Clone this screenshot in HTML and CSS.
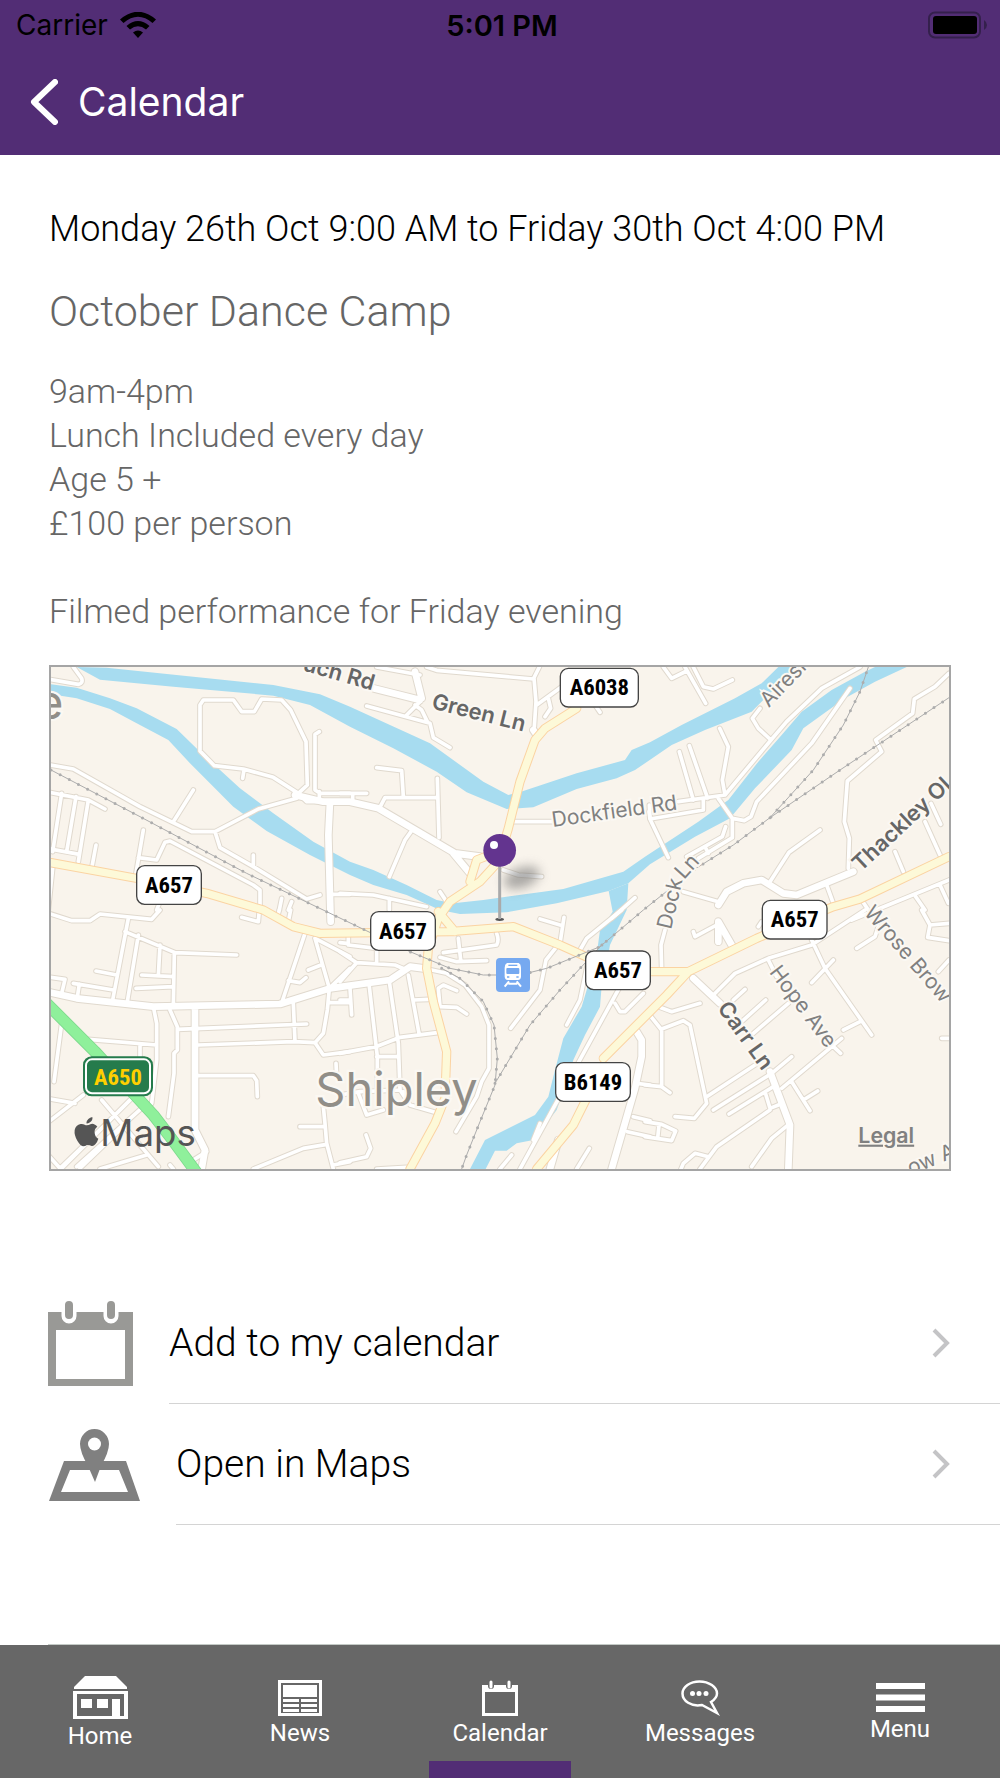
FILE: index.html
```html
<!DOCTYPE html>
<html lang="en">
<head>
  <meta charset="UTF-8">
  <meta name="viewport" content="width=device-width, initial-scale=1.0">
  <title>Calendar</title>
  <link rel="stylesheet" href="styles.css">
</head>
<body>
  <header class="header">
    <div class="status">
      <div class="carrier">
        <span>Carrier</span>
        <svg width="36" height="26" viewBox="0 0 36 26" aria-hidden="true">
          <path d="M0 7.5Q18-8 36 7.5L32.5 11Q18-1.5 3.5 11z"/>
          <path d="M6.5 14Q18 4 29.5 14L26 17.5Q18 11 10 17.5z"/>
          <path d="M13 20.5Q18 16.5 23 20.5L18 26z"/>
        </svg>
      </div>
      <span class="time">5:01 PM</span>
      <svg class="battery" width="60" height="28" viewBox="0 0 60 28" aria-hidden="true">
        <rect x="1" y="1.5" width="51" height="25" rx="6" fill="none" stroke="#34204c" stroke-width="2"/>
        <rect x="5" y="5" width="44" height="18" rx="3"/>
        <path d="M56 9q3 2 3 5t-3 5z" fill="#34204c"/>
      </svg>
    </div>
    <a href="#" class="back">
      <svg width="28" height="46" viewBox="0 0 28 46" aria-hidden="true">
        <path d="M25 3L4 23L25 43" fill="none" stroke="#fff" stroke-width="6" stroke-linecap="round" stroke-linejoin="round"/>
      </svg>
      <span>Calendar</span>
    </a>
  </header>

  <main class="main">
    <!-- Event details -->
    <section class="event">
      <p class="date">Monday 26th Oct 9:00 AM to Friday 30th Oct 4:00 PM</p>
      <h1>October Dance Camp</h1>
      <p class="description">9am-4pm<br>Lunch Included every day<br>Age 5 +<br>£100 per person<br><br>Filmed performance for Friday evening</p>

      <!-- Map -->
      <div class="map">
        <svg viewBox="33 36 2694 1506" role="img" aria-label="Map of Shipley">
          <defs>
            <filter id="soft" x="-50%" y="-50%" width="200%" height="200%"><feGaussianBlur stdDeviation="16"/></filter>
            <g id="minor">
              <g>
                <path d="M20 72L115 88Q130 85 125 70L100 36M20 328L100 342L300 455L455 530H525L655 462L770 430M525 530L540 578L640 635L800 732L840 720M640 635V600M400 500L460 405M20 410L145 435L195 462M65 415L38 590M108 425L80 590M145 435L115 620M20 580L118 598M168 570L155 640M310 525L287 660M295 608L350 615L375 562L390 558L640 690L660 705V765M523 332L480 288V150L490 135H580L605 170H643L665 132L725 135L752 165L798 260L802 390L775 415L700 367L610 342L523 332M612 345L608 370M838 230L825 238V405L840 415H930M775 415L800 440L850 440M838 410V438M880 718H930M38 640L25 765M725 730L718 765M755 740L745 765M350 765L360 740"/>
              </g>
              <g transform="translate(900 0)">
                <path d="M110 36L240 60M260 36L290 46L580 72L598 36M582 70L588 140L583 215M590 150L665 95M625 130L632 160L615 185M240 140L200 180M80 153L270 205L280 248L330 278M225 150L245 165L262 200M765 150L780 172M0 415H80M38 415V440M110 338L185 347L190 425M118 460L135 428H292M292 370L297 548M213 530L195 555L148 665M515 500H640M490 645L535 660L605 665M0 715L100 720L260 755M148 730V765M300 710L320 740M815 790L885 728M930 490L928 450"/>
              </g>
              <g transform="translate(1815 0)">
                <path d="M55 36L80 70L125 48M120 36L182 145M145 36L175 95L205 102L262 75M345 160L322 190L340 220L378 255M645 36L530 100L425 200L378 255L240 420L100 440M224 220L250 275L232 375L240 420M133 272L188 430M103 290L145 435M175 430V465L15 492L70 608M15 492L12 470M220 430L262 490L298 497L318 485L335 440L500 265L615 100M262 490V548L160 610M242 515L232 545L125 605M180 575L190 595M912 55L870 95L808 132L803 175L692 255L710 290L607 378L598 500L613 550L610 640M375 680L432 592L525 525M115 710L225 742M750 590L775 650M840 500L885 600M858 445L887 508M545 690L565 745M620 795L912 675M812 725L840 765M885 690L910 745M650 735L670 765"/>
              </g>
              <g transform="translate(0 765)">
                <path d="M20 8L95 32H150L180 12L335 28L360 0M265 25L218 270M255 65L405 128L590 135M295 75L262 275M360 105L355 198M403 130L400 285M305 195L400 200M288 235L400 230M168 183L230 195M100 220L220 240M118 222L112 262M20 200L75 208L65 250M605 22L655 35L658 0M718 0L712 20M752 0L745 35M795 70L728 270M745 212L780 218L798 203M825 85L868 235L862 300L850 370L825 398L760 395L475 405M843 165L805 180M825 85L930 140M868 235L930 175M870 278H930M760 280L765 395M412 358L800 342M825 398L850 435L930 425M475 497H640L650 512L652 560M888 460L890 500M20 565L105 580M145 388L350 405M300 405V440M342 300L350 340V450L335 580M390 300L412 350V420L402 430V490L385 620M65 340L42 515M130 555L20 640M185 570L355 770M275 565L20 820M310 590L110 770M20 730L60 775L200 640M120 775L260 640M180 777L320 735M390 765L400 777M780 650H850M850 590L855 640L860 700L880 777M640 777L790 715L860 703M880 765L930 755M460 750L500 725"/>
              </g>
              <g transform="translate(900 765)">
                <path d="M25 80V105M25 105L110 115V155M20 100L0 98M0 125L50 158L165 165L200 180M50 158L0 215M355 85L362 150M310 128L470 105Q478 90 470 70M300 142L350 155L440 152M600 27L660 45M672 22L660 100M650 110L618 150L600 240L512 355M745 150L720 270L680 345M845 0L740 85L720 120M840 230L540 777M825 280L840 305H855L910 250M0 270H30M30 235L35 315M88 230L112 440V530M148 215L175 400L180 540M205 195L237 370M222 270L265 268M300 290L295 235L310 225L350 242M300 290L350 292L380 312M0 430L108 410L180 382L292 368M110 440H175M275 180L320 190L375 225L425 290L447 345V475L425 515L410 560L348 665M0 555L60 545L180 540L210 585L285 607M55 550L80 615L130 600M78 675L92 715L80 740L0 758M190 545L200 580M600 640L580 690M748 715L710 777M515 735L480 777M890 520L930 525M880 620L930 632M862 665L930 680M110 777L200 772"/>
              </g>
              <g transform="translate(1815 765)">
                <path d="M60 60L48 105L50 180M215 45L150 80L145 65M340 50L350 35M205 255L270 190L370 145L500 105L660 0M500 90L540 175L680 375M565 150L500 218M645 335L595 360M370 150L395 200M635 115L690 80L700 50M830 0L855 45L912 40M855 45L848 82L912 92M912 150L880 185M890 385H912M40 290L80 305L165 280M10 310L50 360V530L75 548M50 357L115 332L135 345L185 580L148 625L90 620M50 530L0 525M265 270L300 238M290 335L362 270M325 370L430 280M185 560L330 465M205 600L380 490L440 440M252 612L385 530M410 535L590 385M555 400L587 430M440 515L495 602M475 570L518 543M360 545L375 595L400 585M375 600L215 710L165 777M435 640L380 685L320 770M190 740L150 730L115 760L108 777M0 635L50 643L92 663L80 692L0 680M42 645L38 685"/>
              </g>
            </g>
            <g id="major">
              <path d="M765 420L850 440H930L1015 460L1245 595L1320 605M1240 595L1290 655M870 440L865 540L872 800M1000 100L1140 135M1125 50L1145 130M1480 225L1490 240M20 1010L110 1030L340 1055L720 1047L870 1000L1050 975L1110 935L1150 940M465 1055V1425L495 1485L485 1542M1960 970L2040 1045M2190 1250L2250 1410L2245 1542M2035 860V800L2075 870M2035 750L2060 710L2110 685L2165 675L2230 715L2270 720L2440 650M1790 1130L1805 1155V1205L1785 1300L1715 1542M1555 1455L1530 1542"/>
            </g>
            <g id="primary">
              <path d="M33 623L300 672L500 715L670 765L760 815L840 835L1230 830L1420 815L1560 870L1660 915L1740 950L1945 950L2150 850L2380 755L2460 732L2727 605M1610 160L1515 220L1485 255L1440 380L1405 520L1375 620L1320 680L1230 740L1195 790L1165 880L1160 940L1180 1040L1220 1190L1215 1330L1185 1405L1110 1542M1375 590L1310 615L1290 680M1945 950L1880 1020L1690 1210M1640 1330L1600 1410L1490 1542M1195 770L1245 830"/>
            </g>
            <g id="rail">
              <path d="M33 345L300 485L620 655L860 770L1110 890L1230 940L1330 960H1440L1520 940L1680 875L1810 765L1960 645L2080 570L2190 488L2400 345L2727 128M2190 488L2320 345L2410 210L2460 110L2485 36M1205 940L1260 970L1330 1040L1362 1110L1372 1210L1365 1290L1320 1400L1280 1500L1265 1542M1365 1285L1470 1110L1560 1005L1690 865"/>
            </g>
          </defs>

          <rect x="33" y="36" width="2694" height="1506" fill="#f9f4ec"/>

          <g class="water">
            <path d="M110 36L200 38 700 90 840 118 930 155 1170 265 1330 380 1405 420 1450 408 1610 355 1755 315 1775 285 1830 262 1925 210 2085 130 2165 85 2215 36H2290L2195 110 2135 170 1995 225 1895 270 1815 325 1785 345 1730 370 1610 402 1480 457 1400 462 1280 412 1190 350 1060 280 930 215 810 150 700 122 400 95 180 74z"/>
            <path d="M33 88L110 98 210 130 290 160 410 222 480 290 600 400 700 475 820 560 930 620 1000 645 1100 690 1190 735 1240 745 1330 735 1570 702 1750 650 1815 605 1975 500 2065 435 2155 320 2225 240 2285 170 2375 105 2475 50 2505 36H2600L2505 80 2415 130 2290 220 2255 285 2145 400 2070 490 1965 545 1830 628 1765 685 1706 708 1550 745 1400 772 1260 777 1200 765 1100 720 1000 690 930 660 810 600 680 528 580 455 450 325 385 255 290 205 210 162 110 130 33 118z"/>
            <path d="M1706 708L1718 770 1680 825 1670 900 1640 1005 1625 1055 1570 1150 1545 1245 1525 1325 1485 1380 1335 1455 1290 1542H1337L1365 1487H1400L1430 1465 1480 1455 1550 1365 1580 1280 1600 1215 1635 1140 1680 1055 1684 1005 1710 870 1760 765 1765 685z"/>
          </g>

          <g class="road">
            <use href="#minor" stroke="#e0d9ce" stroke-width="17"/>
            <use href="#major" stroke="#e0d9ce" stroke-width="26"/>
            <use href="#minor" stroke="#fff" stroke-width="11"/>
            <use href="#major" stroke="#fff" stroke-width="20"/>
            <use href="#primary" stroke="#fbd3a2" stroke-width="28"/>
            <use href="#primary" stroke="#fdf9d8" stroke-width="22"/>
            <path d="M20 1045L165 1190L340 1380L390 1445L475 1560" stroke="#7dd98d" stroke-width="36"/>
            <path d="M20 1045L165 1190L340 1380L390 1445L475 1560" stroke="#8ff09b" stroke-width="31"/>
          </g>
          <g class="rail">
            <use href="#rail" stroke-width="3"/>
            <use href="#rail" stroke-width="9" stroke-dasharray="0 31"/>
          </g>

          <!-- Street and place names -->
          <g class="street">
            <text class="strong" transform="translate(786 46) rotate(16)">uch Rd</text>
            <text class="strong" transform="translate(1172 160) rotate(14)">Green Ln</text>
            <text transform="translate(1538 516) rotate(-8)">Dockfield Rd</text>
            <text transform="translate(2186 160) rotate(-46)">Airesi</text>
            <text transform="translate(1893 825) rotate(-77)">Dock</text>
            <text transform="translate(1932 675) rotate(-48)">Ln</text>
            <text class="strong" transform="translate(2462 652) rotate(-43)">Thackley Ol</text>
            <text transform="translate(2470 775) rotate(49)">Wrose Brow</text>
            <text class="strong" transform="translate(2030 1060) rotate(54)">Carr Ln</text>
            <text transform="translate(2186 952) rotate(53)">Hope Ave</text>
            <text transform="translate(2612 1560) rotate(-22)">ow A</text>
          </g>
          <g class="place">
            <text x="-12" y="193">e</text>
            <text x="826" y="1353">Shipley</text>
          </g>

          <!-- Road shields -->
          <g class="shield">
            <rect x="290" y="632" width="194" height="116" rx="24"/><text x="387" y="713">A657</text>
            <rect x="1561" y="40" width="234" height="116" rx="24"/><text x="1678" y="121">A6038</text>
            <rect x="992" y="770" width="194" height="116" rx="24"/><text x="1089" y="851">A657</text>
            <rect x="1637" y="888" width="194" height="116" rx="24"/><text x="1734" y="969">A657</text>
            <rect x="2167" y="736" width="194" height="116" rx="24"/><text x="2264" y="817">A657</text>
            <rect x="1547" y="1223" width="224" height="116" rx="24"/><text x="1659" y="1304">B6149</text>
          </g>
          <g class="shield green">
            <rect class="edge" x="129" y="1204" width="210" height="120" rx="26"/>
            <rect x="138" y="1213" width="192" height="102" rx="18"/><text x="234" y="1289">A650</text>
          </g>

          <!-- Station -->
          <rect x="1368" y="909" width="102" height="102" rx="12" fill="#76a9f0"/>
          <path d="M1401 924H1436Q1443 928 1443 938V964Q1443 975 1434 975H1403Q1394 975 1394 964V938Q1394 928 1401 924z" fill="#fff"/>
          <path d="M1405 931H1432" stroke="#76a9f0" stroke-width="4"/>
          <rect x="1399" y="939" width="39" height="18" rx="3" fill="#76a9f0"/>
          <path d="M1401 966H1408M1429 966H1436" stroke="#76a9f0" stroke-width="5"/>
          <path d="M1407 979L1394 995M1430 979L1443 995M1405 986H1432" stroke="#fff" stroke-width="6"/>

          <!-- Pin -->
          <ellipse cx="1445" cy="668" rx="56" ry="30" fill="#777" opacity="0.6" filter="url(#soft)" transform="rotate(-20 1445 668)"/>
          <ellipse cx="1379" cy="793" rx="13" ry="5" fill="#555"/>
          <path d="M1379 620V792" stroke="#aaa" stroke-width="9"/>
          <circle cx="1379" cy="586" r="49" fill="#63348f"/>
          <circle cx="1362" cy="570" r="12" fill="#fff"/>

          <!-- Credits -->
          <g class="credits">
            <path d="M157 1386Q159 1395 151 1401 146 1406 139 1405 139 1397 145 1392 150 1387 157 1386zM140 1411Q147 1411 151 1408 157 1404 165 1409 169 1411 172 1415 162 1422 164 1434 165 1446 175 1451 172 1461 166 1468 161 1474 155 1473 147 1469 141 1470 136 1474 129 1474 121 1472 112 1457 102 1441 104 1425 107 1410 122 1407 128 1406 134 1409 137 1411 140 1411z"/>
            <text class="brand" x="181" y="1472">Maps</text>
            <a href="#"><text class="legal" x="2455" y="1463">Legal</text></a>
          </g>
        </svg>
      </div>
    </section>

    <!-- Actions -->
    <div class="actions">
      <button type="button" class="action">
        <svg width="85" height="86" viewBox="0 0 85 86" aria-hidden="true">
          <path d="M0 11H85V85H0zM8 29V78H77V29z" fill="#999996" fill-rule="evenodd"/>
          <path d="M21 5V15M63 5V15" stroke="#fff" stroke-width="15" stroke-linecap="round"/>
          <path d="M21 4V14M63 4V14" stroke="#999996" stroke-width="8" stroke-linecap="round"/>
        </svg>
        <span class="label">
          <span>Add to my calendar</span>
          <svg width="18" height="32" viewBox="0 0 18 32" aria-hidden="true"><path d="M2 3L15 16L2 29" fill="none" stroke="#c4c4c6" stroke-width="4"/></svg>
        </span>
      </button>
      <button type="button" class="action">
        <svg width="92" height="74" viewBox="0 0 92 74" aria-hidden="true">
          <path d="M16 33H78L92 73H1zM22 42L13 64H80L71 42z" fill="#808080" fill-rule="evenodd"/>
          <path d="M47 54L40 38Q32 24 32 16A14.5 15 0 0 1 61 16Q61 24 53 38z" fill="#808080"/>
          <circle cx="46.5" cy="16" r="6.5" fill="#fff"/>
        </svg>
        <span class="label">
          <span>Open in Maps</span>
          <svg width="18" height="32" viewBox="0 0 18 32" aria-hidden="true"><path d="M2 3L15 16L2 29" fill="none" stroke="#c4c4c6" stroke-width="4"/></svg>
        </span>
      </button>
    </div>
  </main>

  <!-- Tab bar -->
  <nav class="tabs">
    <a href="#">
      <svg width="55" height="43" viewBox="0 0 55 43" aria-hidden="true">
        <path d="M12 0H43L54 11V13H1V11z"/>
        <path d="M0 15H55V43H0zM4 18V40H51V18z" fill-rule="evenodd"/>
        <path d="M8 23H19V32H8zM24 23H35V32H24zM39 23H47V41H39z"/>
      </svg>
      <span>Home</span>
    </a>
    <a href="#">
      <svg width="44" height="36" viewBox="0 0 44 36" aria-hidden="true">
        <path d="M0 0H44V36H0zM3 3V33H41V3z" fill-rule="evenodd"/>
        <path d="M5 5H39V17H5zM5 19H21V22H5zM23 19H39V22H23zM5 24H21V27H5zM23 24H39V27H23zM5 29H21V32H5zM23 29H39V32H23z"/>
      </svg>
      <span>News</span>
    </a>
    <a href="#" class="active">
      <svg width="36" height="36" viewBox="0 0 36 36" aria-hidden="true">
        <path d="M0 5H36V36H0zM3 12V33H33V12z" fill-rule="evenodd"/>
        <path d="M9 2V6M27 2V6" stroke="#676767" stroke-width="6" stroke-linecap="round"/>
        <path d="M9 2V7M27 2V7" stroke="#fff" stroke-width="3" stroke-linecap="round"/>
      </svg>
      <span>Calendar</span>
    </a>
    <a href="#">
      <svg width="39" height="36" viewBox="0 0 39 36" aria-hidden="true">
        <path d="M21 25C10 27 1.5 21 1.5 13.5C1.5 7 9 1.5 18.5 1.5S36 7 36 13.5Q36 18 30 22L36 33z" fill="none" stroke="#fff" stroke-width="2.5"/>
        <circle cx="11.5" cy="13.5" r="2.5"/><circle cx="18" cy="13.5" r="2.5"/><circle cx="25" cy="13.5" r="2.5"/>
      </svg>
      <span>Messages</span>
    </a>
    <a href="#">
      <svg width="49" height="29" viewBox="0 0 49 29" aria-hidden="true">
        <path d="M0 0H49V6H0zM0 11.5H49V17.5H0zM0 23H49V29H0z"/>
      </svg>
      <span>Menu</span>
    </a>
  </nav>
</body>
</html>
```
FILE: styles.css
```css
* {
  box-sizing: border-box;
}
body {
  font-family: Roboto, sans-serif;
  font-weight: 300;
  background-color: #fff;
  color: #000;
  margin: 0;
  min-height: 100vh;
  display: flex;
  flex-direction: column;
}
svg {
  display: block;
  flex-shrink: 0;
}
h1, p {
  margin: 0;
}
a {
  color: inherit;
  text-decoration: none;
}

/* Header */
.header {
  background-color: #522d75;
  font-family: Inter, sans-serif;
  font-weight: 400;
}
.status {
  display: grid;
  grid-template-columns: 1fr auto 1fr;
  align-items: center;
  height: 50px;
  padding: 0 12px 0 16px;
  font-size: 28px;
}
.carrier {
  display: flex;
  align-items: center;
  gap: 12px;
}
.time {
  font-size: 29px;
  font-weight: 600;
}
.battery {
  justify-self: end;
}
.back {
  display: inline-flex;
  align-items: center;
  gap: 20px;
  height: 105px;
  padding-left: 30px;
  padding-bottom: 2px;
  font-size: 39px;
  color: #fff;
}
.header {
  display: flex;
  flex-direction: column;
  align-items: flex-start;
}
.status {
  width: 100%;
}

/* Event */
.main {
  flex: 1;
  display: flex;
  flex-direction: column;
}
.main::after {
  content: "";
  margin-top: auto;
  margin-left: 48px;
  border-top: 1px solid #c4cac6;
}
.event {
  padding: 52px 49px 0;
}
.date {
  font-size: 36px;
  line-height: 44px;
}
h1 {
  margin: 34px 0 32px;
  font-size: 43px;
  font-weight: 300;
  line-height: 52px;
  color: #666;
}
.description {
  font-size: 34px;
  line-height: 44px;
  color: #666;
}
.map {
  margin-top: 32px;
  border: 2px solid #a5a5a5;
}
.map svg {
  width: 100%;
  height: auto;
}
.map text {
  font-family: Inter, sans-serif;
  font-weight: 400;
}
.water {
  fill: #a7dcf0;
}
.road, .rail {
  fill: none;
  stroke-linecap: round;
  stroke-linejoin: round;
}
.rail {
  stroke: #adadad;
}
.street text {
  font-size: 63px;
  fill: #808080;
  stroke: #fbf8f3;
  stroke-width: 12px;
  paint-order: stroke;
}
.map .strong {
  font-size: 66px;
  font-weight: 600;
  fill: #666;
}
.place text {
  font-size: 141px;
  fill: #918e88;
  stroke: #fbf8f3;
  stroke-width: 14px;
  paint-order: stroke;
}
.shield rect {
  fill: #fff;
  stroke: #444;
  stroke-width: 4px;
}
.map .shield text {
  font-family: "Liberation Sans Narrow", "Roboto Condensed", Roboto, sans-serif;
  font-size: 68px;
  font-weight: 700;
  text-anchor: middle;
}
.green rect {
  fill: #257b4c;
  stroke: #fff;
  stroke-width: 6px;
}
.green .edge {
  stroke: none;
}
.green text {
  fill: #ffcf00;
}
.credits {
  fill: #555;
}
.map .brand {
  font-size: 110px;
}
.map .legal {
  font-size: 64px;
  font-weight: 600;
  fill: #808080;
  text-decoration: underline;
}

/* Actions */
.actions {
  margin-top: 112px;
}
.action {
  display: flex;
  align-items: center;
  gap: 36px;
  width: 100%;
  height: 121px;
  padding: 0 0 0 48px;
  border: none;
  background: none;
  font: inherit;
  font-size: 39px;
  color: #000;
  text-align: left;
  cursor: pointer;
}
.label {
  flex: 1;
  align-self: stretch;
  display: flex;
  align-items: center;
  justify-content: space-between;
  padding-right: 50px;
  border-bottom: 1px solid #d4d4d4;
}

/* Tab bar */
.tabs {
  display: grid;
  grid-template-columns: repeat(5, 1fr);
  height: 133px;
  background-color: #676767;
}
.tabs a {
  position: relative;
  display: flex;
  flex-direction: column;
  align-items: center;
  justify-content: center;
  font-size: 24px;
  font-weight: 400;
  line-height: 34px;
  padding-top: 6px;
  color: #fff;
}
.tabs svg {
  fill: #fff;
}
.active::after {
  content: "";
  position: absolute;
  left: 29px;
  right: 29px;
  bottom: 0;
  height: 17px;
  background-color: #522d75;
}
```
